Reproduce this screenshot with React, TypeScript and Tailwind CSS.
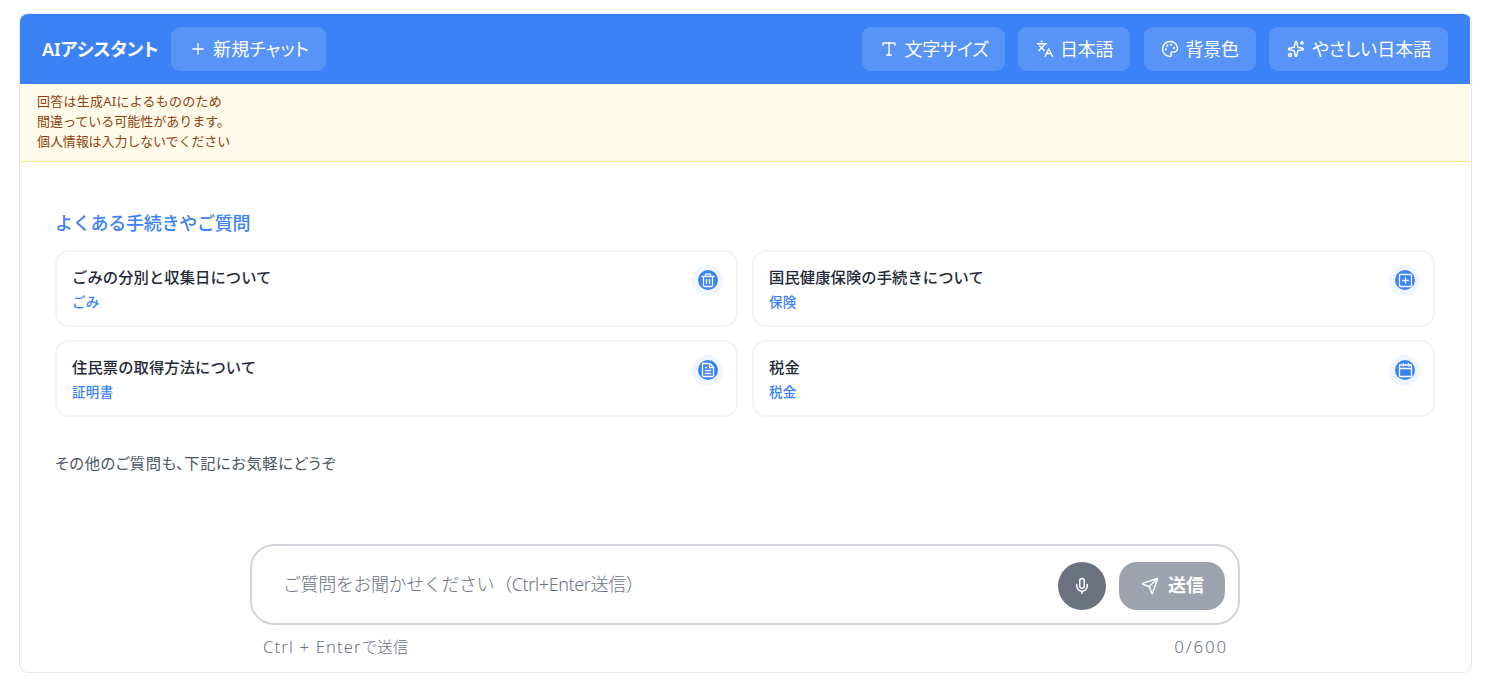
import { useState } from "react";
import type { ReactNode } from "react";
import { Languages, Mic, Palette, Plus, Send, Sparkles, Type } from "lucide-react";

type Topic = {
  title: string;
  tag: string;
  icon: ReactNode;
};

function TrashIcon() {
  return (
    <svg viewBox="0 0 20 20" fill="none" stroke="currentColor" strokeWidth="1.3" className="h-5 w-5" aria-hidden>
      <path d="M3.5 6.5h13M7.5 6.3V4.2h5v2.1M5.5 6.8v8.7c0 .6.4 1 1 1h7c.6 0 1-.4 1-1V6.8M8.5 9v5M11.5 9v5" />
    </svg>
  );
}

function InsuranceIcon() {
  return (
    <svg viewBox="0 0 20 20" fill="none" stroke="currentColor" strokeWidth="1.3" className="h-5 w-5" aria-hidden>
      <rect x="4.5" y="4.5" width="12" height="12" rx="0.8" />
      <path d="M10.5 7.2v6.6M7.2 10.5h6.6" />
    </svg>
  );
}

function DocumentIcon() {
  return (
    <svg viewBox="0 0 20 20" fill="none" stroke="currentColor" strokeWidth="1.3" className="h-5 w-5" aria-hidden>
      <path d="M4.5 4.3c0-.5.3-.8.8-.8h6.5l3.7 3.7v8.5c0 .5-.3.8-.8.8H5.3c-.5 0-.8-.3-.8-.8V4.3ZM11.5 3.7v3.8h3.8M6.8 7.5h2.5M6.8 10.5h6.4M6.8 13.5h6.4" />
    </svg>
  );
}

function CalendarIcon() {
  return (
    <svg viewBox="0 0 20 20" fill="none" stroke="currentColor" strokeWidth="1.3" className="h-5 w-5" aria-hidden>
      <rect x="4.5" y="5" width="12" height="11.5" rx="0.8" />
      <path d="M4.5 8.5h12M8.5 3v3.5M13.5 3v3.5" />
    </svg>
  );
}

const topics: Topic[] = [
  { title: "ごみの分別と収集日について", tag: "ごみ", icon: <TrashIcon /> },
  { title: "国民健康保険の手続きについて", tag: "保険", icon: <InsuranceIcon /> },
  { title: "住民票の取得方法について", tag: "証明書", icon: <DocumentIcon /> },
  { title: "税金", tag: "税金", icon: <CalendarIcon /> },
];

function HeaderButton({ className = "", children }: { className?: string; children: ReactNode }) {
  return (
    <button
      type="button"
      className={`flex h-11 shrink-0 items-center whitespace-nowrap rounded-[9px] bg-white/15 text-[18px] leading-none text-white hover:bg-white/25 [font-feature-settings:'palt'] ${className}`}
    >
      {children}
    </button>
  );
}

function TopicCard({ topic }: { topic: Topic }) {
  return (
    <button
      type="button"
      className="flex h-[77px] items-start justify-between rounded-[14px] border-2 border-[#f3f4f6] bg-white pl-[15px] pr-[13px] pt-[13px] text-left"
    >
      <span className="flex flex-col">
        <span className="text-[15.3px] font-medium leading-6 tracking-[0.08px] text-[#1f2937]">{topic.title}</span>
        <span className="mt-[3px] text-[13.5px] font-medium leading-[21px] tracking-[0.35px] text-[#3b82f6]">{topic.tag}</span>
      </span>
      <span className="flex h-[31px] w-[31px] items-start justify-center rounded-full bg-[#eff6ff] pt-[5px]">
        <span className="flex h-5 w-5 items-center justify-center rounded-full bg-[#3b82f6] text-white">{topic.icon}</span>
      </span>
    </button>
  );
}

export default function App() {
  const [text, setText] = useState("");

  return (
    <div className="h-[686px] bg-white pb-[13px] pl-[19px] pr-4 pt-[13px] font-['Noto_Sans','Noto_Sans_CJK_JP',sans-serif]">
      <div className="flex h-[660px] flex-col overflow-hidden rounded-[9px] border border-[#e5e7eb] bg-white pr-px">
        {/* Header */}
        <header className="flex h-[70px] shrink-0 items-center bg-[#3b82f6] pl-[22px] pr-[22px]">
          <h1 className="w-[129px] whitespace-nowrap text-[18px] font-semibold text-white [font-feature-settings:'palt']">AIアシスタント</h1>
          <HeaderButton className="w-[155px] pl-[18px]">
            <Plus size={18} strokeWidth={1.7} />
            <span className="ml-[6px] tracking-[0.15px]">新規チャット</span>
          </HeaderButton>
          <div className="ml-auto flex gap-[13.5px]">
            <HeaderButton className="w-[143px] pl-[18px]">
              <Type size={18} strokeWidth={1.9} />
              <span className="ml-[7px] tracking-[-0.2px]">文字サイズ</span>
            </HeaderButton>
            <HeaderButton className="w-[112px] pl-[18px]">
              <Languages size={18} strokeWidth={1.9} />
              <span className="ml-[6px] tracking-[-0.2px]">日本語</span>
            </HeaderButton>
            <HeaderButton className="w-[112px] pl-[17px]">
              <Palette size={18} strokeWidth={1.9} />
              <span className="ml-[7px] tracking-[-0.2px]">背景色</span>
            </HeaderButton>
            <HeaderButton className="w-[179px] pl-[18px]">
              <Sparkles size={18} strokeWidth={1.9} />
              <span className="ml-[7px]">やさしい日本語</span>
            </HeaderButton>
          </div>
        </header>

        {/* Notice */}
        <div className="h-[78px] shrink-0 border-b border-[#fde68a] bg-[#fffbeb] pl-[17px] pt-[7px] text-[13px] leading-5 text-[#92400e]">
          <p className="tracking-[0.25px]">回答は生成AIによるもののため</p>
          <p className="tracking-[0px]">間違っている可能性があります。</p>
          <p className="tracking-[-0.1px]">個人情報は入力しないでください</p>
        </div>

        {/* Frequent topics */}
        <main className="px-[35px] pt-[47px]">
          <h2 className="text-[18px] font-medium leading-7 tracking-[-0.25px] text-[#3b82f6]">よくある手続きやご質問</h2>
          <div className="mt-[13px] grid grid-cols-2 gap-x-[14px] gap-y-[13px]">
            {topics.map((t) => <TopicCard key={t.title} topic={t} />)}
          </div>
          <p className="mt-[34px] text-[15.3px] leading-6 tracking-[0.55px] text-[#4b5563] [font-feature-settings:'palt']">その他のご質問も、下記にお気軽にどうぞ</p>
        </main>

        {/* Input */}
        <div className="ml-[230px] mt-auto w-[990px] pb-[13px]">
          <div className="flex h-[81px] items-center rounded-[24px] border-2 border-[#d1d5db] bg-white pl-[31px] pr-[13px]">
            <input
              value={text}
              onChange={(e) => setText(e.target.value)}
              maxLength={600}
              placeholder="ご質問をお聞かせください（Ctrl+Enter送信）"
              className="-mt-[2px] h-10 min-w-0 flex-1 bg-transparent text-[18px] font-light tracking-[-0.4px] text-[#1f2937] outline-none placeholder:text-[#6b7280]"
            />
            <button type="button" className="mt-[2px] flex h-12 w-12 items-center justify-center rounded-full bg-[#6b7280] text-white" aria-label="音声入力">
              <Mic size={18} strokeWidth={2} />
            </button>
            <button type="button" className="ml-[13px] mt-[2px] flex h-12 w-[106px] items-center rounded-[18px] bg-[#9ca3af] pl-[22px] text-[18px] font-bold text-white">
              <Send size={18} strokeWidth={1.9} />
              <span className="ml-[9px]">送信</span>
            </button>
          </div>
          <div className="mt-[10px] flex h-6 items-center justify-between pl-[13px] pr-3 text-[15.5px] font-light leading-6 text-[#6b7280]">
            <span><span className="text-[16.5px] tracking-[1.2px]">Ctrl + Enter</span>で送信</span>
            <span className="-mt-px text-[17px] tracking-[1.8px]">{text.length}/600</span>
          </div>
        </div>
      </div>
    </div>
  );
}
